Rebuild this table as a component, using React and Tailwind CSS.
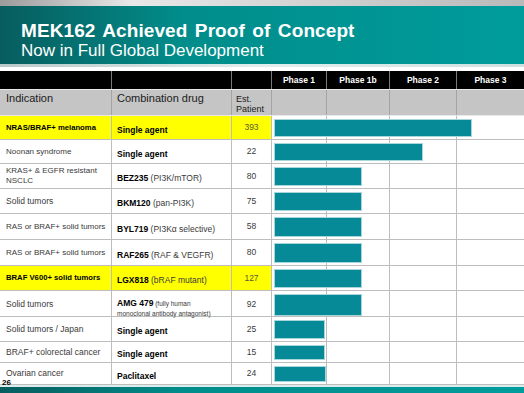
import React from "react";

const rows = [
  { ind: ["NRAS/BRAF+ melanoma"], indBold: true, drug: { b: "Single agent" }, est: "393", bar: 198, yellow: true, h: 24, fs: "text-[7.7px]" },
  { ind: ["Noonan syndrome"], drug: { b: "Single agent" }, est: "22", bar: 149, h: 24, fs: "text-[8px]" },
  { ind: ["KRAS+ & EGFR resistant", "NSCLC"], drug: { b: "BEZ235", r: " (PI3K/mTOR)" }, est: "80", bar: 88, h: 25, fs: "text-[8px]" },
  { ind: ["Solid tumors"], drug: { b: "BKM120", r: " (pan-PI3K)" }, est: "75", bar: 88, h: 25, fs: "text-[8.5px]" },
  { ind: ["RAS or BRAF+ solid tumors"], drug: { b: "BYL719", r: " (PI3Kα selective)" }, est: "58", bar: 88, h: 26, fs: "text-[8px]" },
  { ind: ["RAS or BRAF+ solid tumors"], drug: { b: "RAF265", r: " (RAF & VEGFR)" }, est: "80", bar: 88, h: 26, fs: "text-[8px]" },
  { ind: ["BRAF V600+ solid tumors"], indBold: true, drug: { b: "LGX818", r: " (bRAF mutant)" }, est: "127", bar: 88, yellow: true, h: 25, fs: "text-[7.7px]" },
  { ind: ["Solid tumors"], drug: { b: "AMG 479", small: true }, est: "92", bar: 88, h: 26, fs: "text-[8.5px]" },
  { ind: ["Solid tumors / Japan"], drug: { b: "Single agent" }, est: "25", bar: 51, h: 25, fs: "text-[8.5px]" },
  { ind: ["BRAF+ colorectal cancer"], drug: { b: "Single agent" }, est: "15", bar: 51, h: 21, fs: "text-[8.5px]" },
  { ind: ["Ovarian cancer"], drug: { b: "Paclitaxel" }, est: "24", bar: 52, h: 22, fs: "text-[8.5px]" },
];

const cols = "grid grid-cols-[112px_120px_40px_55px_63px_67px_67px]";

function Drug({ d }) {
  if (d.small) {
    return (
      <div className="leading-[1.2]">
        <div>
          <span className="font-bold text-black text-[8.5px]">{d.b}</span>
          <span className="text-[6.5px]"> (fully human</span>
        </div>
        <div className="text-[6.5px]">monoclonal antibody antagonist)</div>
      </div>
    );
  }
  return (
    <div className="leading-none">
      <span className="font-bold text-black text-[8.5px]">{d.b}</span>
      {d.r && <span className="text-[8.5px]">{d.r}</span>}
    </div>
  );
}

export default function App() {
  return (
    <div className="relative w-[524px] h-[393px] overflow-hidden bg-white font-['Liberation_Sans',Arial,sans-serif]">
      <div className="h-[6px] bg-linear-to-r from-[#9c9c9c] via-[#e8e8e8] via-25% to-[#b9b9b9]" />
      <div className="h-[58px] bg-linear-to-r from-[#075d5e] via-[#008d8b] via-35% to-[#009c9c] pl-[21px] pt-[15px] text-white">
        <div className="text-[19px] font-bold leading-none tracking-[0.1px] [word-spacing:2px]">MEK162 Achieved Proof of Concept</div>
        <div className="text-[17px] leading-none mt-[2px]">Now in Full Global Development</div>
      </div>
      <div className="h-[3px] bg-linear-to-r from-[#b9c9c9] via-[#e2eeee] to-[#cfe0e0]" />
      <div className="h-[4px]" />

      {/* black header */}
      <div className={`${cols} h-[18px] bg-black text-white font-bold text-[8.5px]`}>
        <div className="border-r border-[#7a7a7a]" />
        <div className="border-r border-[#7a7a7a]" />
        <div className="border-r border-[#7a7a7a]" />
        <div className="border-r border-[#7a7a7a] flex items-center justify-center">Phase 1</div>
        <div className="border-r border-[#7a7a7a] flex items-center justify-center">Phase 1b</div>
        <div className="border-r border-[#7a7a7a] flex items-center justify-center">Phase 2</div>
        <div className="flex items-center justify-center">Phase 3</div>
      </div>

      {/* gray header */}
      <div className={`${cols} h-[27px] bg-[#c5c5c5] border-t border-[#e8e8e8] border-b border-[#b5b5b5] text-[#202020]`}>
        <div className="border-r border-[#a4a4a4] pl-[6px] pt-[3px] text-[11px] leading-none">Indication</div>
        <div className="border-r border-[#a4a4a4] pl-[5px] pt-[3px] text-[11px] leading-none">Combination drug</div>
        <div className="border-r border-[#a4a4a4] pl-[4px] pt-[4px] text-[9px] leading-[1.15]">
          <div>Est.</div>
          <div>Patient</div>
        </div>
        <div className="border-r border-[#a4a4a4]" />
        <div className="border-r border-[#a4a4a4]" />
        <div className="border-r border-[#a4a4a4]" />
        <div />
      </div>

      {rows.map((r, i) => (
        <div
          key={i}
          className={`${cols} border-b border-[#bdbdbd] text-[#3a3a3a]`}
          style={{ height: r.h }}
        >
          <div className={`border-r border-[#bdbdbd] pl-[6px] flex flex-col justify-center ${r.fs} leading-[1.2] ${r.yellow ? "bg-[#ffff00]" : ""} ${r.indBold ? "font-bold text-black" : ""}`}>
            {r.ind.map((t, j) => (
              <div key={j}>{t}</div>
            ))}
          </div>
          <div className={`border-r border-[#bdbdbd] pl-[5px] flex items-center ${r.yellow ? "bg-[#ffff00]" : ""}`}>
            <Drug d={r.drug} />
          </div>
          <div className={`border-r border-[#bdbdbd] flex items-center justify-center text-[8.5px] ${r.yellow ? "bg-[#ffff00] text-[#5a5a3a]" : ""}`}>
            {r.est}
          </div>
          <div className="col-span-4 relative grid grid-cols-[55px_63px_67px_67px]">
            <div className="border-r border-[#bdbdbd]" />
            <div className="border-r border-[#bdbdbd]" />
            <div className="border-r border-[#bdbdbd]" />
            <div />
            <div
              className="absolute left-[2px] top-[3px] bottom-[2px] bg-[#078a97] border border-[#a9d6da]"
              style={{ width: r.bar }}
            />
          </div>
        </div>
      ))}

      <div className="h-[2px] bg-[#dcebeb]" />
      <div className="h-[6px] bg-linear-to-r from-[#075d5e] via-[#008d8b] via-35% to-[#009c9c]" />

      <span className="absolute left-[2px] top-[379px] text-[8px] font-bold leading-none text-black">26</span>
    </div>
  );
}
